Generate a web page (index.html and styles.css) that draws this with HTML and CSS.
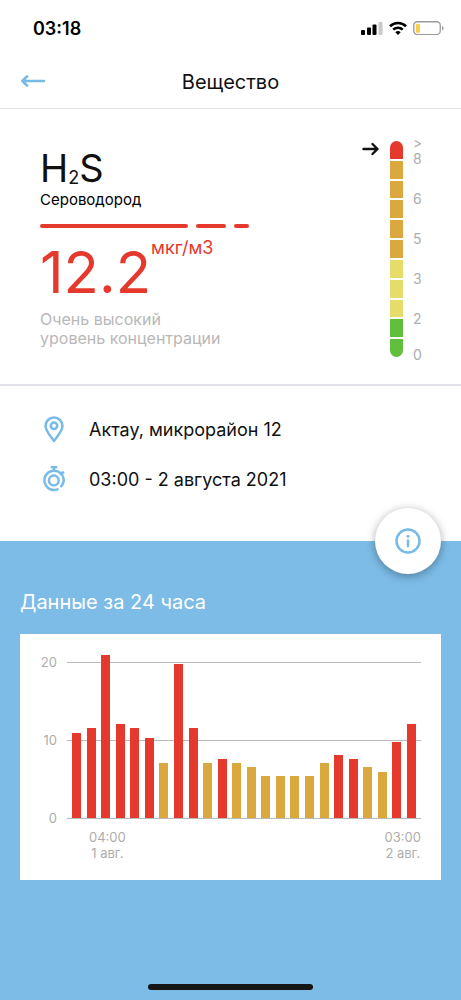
FILE: index.html
```html
<!DOCTYPE html>
<html lang="ru">
<head>
<meta charset="utf-8">
<meta name="viewport" content="width=device-width, initial-scale=1">
<title>Вещество</title>
<link rel="stylesheet" href="styles.css">
</head>
<body>
<div class="app">
  <div class="status">
    <span class="clock">03:18</span>
    <div class="status-icons">
      <svg width="22" height="14" viewBox="0 0 22 14" aria-hidden="true"><rect x="0" y="9" width="4" height="5" rx="1"/><rect x="6" y="6.500" width="4" height="7.500" rx="1"/><rect x="11.500" y="3.500" width="4" height="10.500" rx="1"/><rect x="17.500" y="1" width="4" height="13" rx="1" fill="#c9c9c9"/></svg>
      <svg width="18" height="14" viewBox="0 0 18 14" fill="none" stroke="#000" stroke-width="2.600" aria-hidden="true"><path d="M1 5.200a11.500 11.500 0 0 1 16 0"/><path d="M4.200 8.600a7 7 0 0 1 9.600 0"/><path d="M9 14l-2.700-2.700a4 4 0 0 1 5.400 0z" fill="#000" stroke="none"/></svg>
      <svg width="31" height="14" viewBox="0 0 31 14" aria-hidden="true"><rect x=".75" y=".75" width="26.500" height="12.800" rx="3.500" fill="none" stroke="#9b9b9b" stroke-width="1.300"/><rect x="2.800" y="2.700" width="4.200" height="9" rx="1.500" fill="#f7ce46"/><path d="M29 4.800c2 .8 2 4 0 4.800z" fill="#9b9b9b"/></svg>
    </div>
  </div>
  <header class="nav">
    <button class="back" type="button" aria-label="Назад">
      <svg width="26" height="14" viewBox="0 0 26 14" fill="none" stroke="#78bbe7" stroke-width="2.600" stroke-linecap="round" stroke-linejoin="round"><path d="M24 6H3M7 1.500L2.300 6 7 10.500"/></svg>
    </button>
    <h1 class="title">Вещество</h1>
  </header>

  <main class="main">
    <section class="substance">
      <div class="reading">
        <div class="formula">H<span class="formula-index">2</span>S</div>
        <div class="name">Сероводород</div>
        <div class="dashes"><i class="dash dash-long"></i><i class="dash dash-mid"></i><i class="dash dash-short"></i></div>
        <div class="amount"><span class="number">12.2</span><span class="unit">мкг/м3</span></div>
        <p class="verdict">Очень высокий<br>уровень концентрации</p>
      </div>
      <div class="scale">
        <svg class="pointer" width="17" height="14" viewBox="0 0 17 14" fill="none" stroke="#111" stroke-width="2.400" stroke-linecap="round" stroke-linejoin="round" aria-hidden="true"><path d="M1.500 7h14M10.500 2l5 5-5 5"/></svg>
        <div class="tube">
          <i class="red"></i><i class="amber"></i><i class="amber"></i><i class="amber"></i><i class="amber"></i><i class="amber"></i><i class="yellow"></i><i class="yellow"></i><i class="yellow"></i><i class="green"></i><i class="green"></i>
        </div>
        <div class="marks"><span>&gt;<br>8</span><span>6</span><span>5</span><span>3</span><span>2</span><span class="mark-zero">0</span></div>
      </div>
    </section>

    <section class="details">
      <div class="detail">
        <svg class="detail-icon" width="28" height="28" viewBox="0 0 28 28" fill="none" stroke="#78bbe7" stroke-width="2.500" stroke-linejoin="round" aria-hidden="true"><path d="M14 26C9.500 20 5.500 15.500 5.500 11a8.500 8.500 0 0 1 17 0c0 4.500-4 9-8.500 15z"/><circle cx="14" cy="10.800" r="3.200"/></svg>
        <span>Актау, микрорайон 12</span>
      </div>
      <div class="detail">
        <svg class="detail-icon" width="28" height="28" viewBox="0 0 28 28" fill="none" stroke="#78bbe7" stroke-width="2.500" stroke-linecap="round" aria-hidden="true"><path d="M11.800 2.200h4.400M14 2.500v3M17.600 24.400A9.700 9.700 0 1 1 20.600 8.200M20.600 8.200l2.600-.7M23.200 12.200a9.700 9.700 0 0 1-1.900 9"/><path d="M20.200 8l2.300 2.300"/><circle cx="13.800" cy="15.500" r="4.900"/></svg>
        <span>03:00 - 2 августа 2021</span>
      </div>
      <button class="info" type="button" aria-label="Информация">
        <svg width="28" height="28" viewBox="0 0 28 28" fill="none" stroke="#78bbe7" stroke-width="2.500" stroke-linecap="round"><circle cx="14" cy="14" r="11.500"/><path d="M14 13.500v5.500"/><circle cx="14" cy="9.200" r="1.500" fill="#78bbe7" stroke="none"/></svg>
      </button>
    </section>

    <section class="history">
      <h2 class="history-title">Данные за 24 часа</h2>
      <div class="card">
        <div class="chart">
          <div class="axis"><span>20</span><span>10</span><span>0</span></div>
          <div class="plot">
            <i class="bar red" style="--v:10.9"></i><i class="bar red" style="--v:11.5"></i><i class="bar red" style="--v:20.9"></i><i class="bar red" style="--v:12"></i><i class="bar red" style="--v:11.5"></i><i class="bar red" style="--v:10.3"></i><i class="bar amber" style="--v:7"></i><i class="bar red" style="--v:19.8"></i><i class="bar red" style="--v:11.5"></i><i class="bar amber" style="--v:7"></i><i class="bar red" style="--v:7.6"></i><i class="bar amber" style="--v:7"></i><i class="bar amber" style="--v:6.5"></i><i class="bar amber" style="--v:5.4"></i><i class="bar amber" style="--v:5.4"></i><i class="bar amber" style="--v:5.4"></i><i class="bar amber" style="--v:5.4"></i><i class="bar amber" style="--v:7"></i><i class="bar red" style="--v:8.1"></i><i class="bar red" style="--v:7.6"></i><i class="bar amber" style="--v:6.5"></i><i class="bar amber" style="--v:5.9"></i><i class="bar red" style="--v:9.8"></i><i class="bar red" style="--v:12"></i>
          </div>
        </div>
        <div class="times"><span>04:00<br>1 авг.</span><span>03:00<br>2 авг.</span></div>
      </div>
    </section>
  </main>
  <div class="home"><i class="home-bar"></i></div>
</div>
</body>
</html>
```
FILE: styles.css
```css
* { box-sizing: border-box; }
body {
  margin: 0;
  background: #fff;
  color: #111;
  font-family: Inter, "Liberation Sans", sans-serif;
}
button { padding: 0; border: 0; background: none; cursor: pointer; }
svg { display: block; flex: none; }
i { display: block; }
.app { display: flex; flex-direction: column; min-height: 100vh; }

.status {
  display: flex;
  align-items: center;
  justify-content: space-between;
  height: 56px;
  padding: 0 17px 0 33px;
}
.clock { font-size: 18px; font-weight: 600; color: #000; }
.status-icons { display: flex; align-items: center; gap: 6px; }
.nav {
  display: grid;
  grid-template-columns: 26px 1fr 26px;
  align-items: center;
  height: 53px;
  padding: 0 20px;
  border-bottom: 1px solid #e3e3e6;
}
.title { margin: 0; font-size: 20px; font-weight: 400; text-align: center; }

.main { flex: 1; display: flex; flex-direction: column; }
.substance {
  display: flex;
  justify-content: space-between;
  padding: 27px 40px 21px;
  border-bottom: 2px solid #e2e2e8;
}
.reading { padding-top: 12px; }
.formula { font-size: 38px; line-height: 40px; }
.formula-index { font-size: 18px; vertical-align: -2px; }
.name { font-size: 15px; line-height: 20px; margin-top: -8px; color: #000; }
.dashes { display: flex; gap: 8px; margin-top: 14px; }
.dash { height: 4px; border-radius: 2px; background: #e5392d; }
.dash-long { width: 148px; }
.dash-mid { width: 30px; }
.dash-short { width: 15px; }
.amount { display: flex; align-items: flex-start; color: #e5392d; }
.number { font-size: 58px; line-height: 88px; }
.unit { padding-top: 8px; font-size: 18px; line-height: 24px; }
.verdict { margin: -6px 0 0; font-size: 16px; line-height: 19px; color: #b8b8b8; }

.scale { display: flex; align-items: flex-start; }
.pointer { margin: 6px 11px 0 0; }
.tube {
  display: flex;
  flex-direction: column;
  gap: 2px;
  width: 13px;
  height: 216px;
  margin-top: 5px;
  border-radius: 7px;
  overflow: hidden;
}
.tube i { flex: 1; }
.marks {
  display: flex;
  flex-direction: column;
  gap: 24px;
  width: 18px;
  margin-top: -1px;
  padding-left: 10px;
  font-size: 14px;
  line-height: 16px;
  color: #adadad;
}
.mark-zero { margin-top: -4px; }
.red { background: #e5392d; }
.amber { background: #dba83d; }
.yellow { background: #e5dc69; }
.green { background: #61bf3d; }

.details {
  position: relative;
  display: flex;
  flex-direction: column;
  gap: 22px;
  padding: 29px 40px 48px;
  font-size: 18px;
}
.detail { display: flex; align-items: center; gap: 21px; height: 28px; }
.info {
  position: absolute;
  right: 20px;
  bottom: -33px;
  display: grid;
  place-items: center;
  width: 66px;
  height: 66px;
  border-radius: 50%;
  background: #fff;
  box-shadow: 0 2px 10px rgba(0, 0, 0, .35);
}

.history { flex: 1; padding: 48px 20px 0; background: #7cbce7; }
.history-title { margin: 0 0 19px; font-size: 20px; line-height: 26px; font-weight: 400; color: #fff; }
.card { padding: 28px 20px 19px; background: #fff; color: #adadad; font-size: 13px; line-height: 16px; }
.chart { display: flex; gap: 10px; }
.axis {
  display: flex;
  flex-direction: column;
  justify-content: space-between;
  width: 17px;
  margin: -8px 0;
  text-align: right;
}
.plot {
  flex: 1;
  display: flex;
  align-items: flex-end;
  justify-content: space-between;
  height: 156px;
  padding: 0 5px;
  background: linear-gradient(#bbb, #bbb) 0 0 / 100% 1px no-repeat, linear-gradient(#bbb, #bbb) 0 50% / 100% 1px no-repeat;
  box-shadow: 0 1px #bbb;
}
.bar { width: 9px; height: calc(var(--v) * 5%); }
.times { display: flex; justify-content: space-between; padding-left: 49px; margin-top: 11px; text-align: center; }
.home { display: flex; justify-content: center; padding-bottom: 10px; background: #7cbce7; }
.home-bar { width: 165px; height: 6px; border-radius: 3px; background: #151515; }
```
